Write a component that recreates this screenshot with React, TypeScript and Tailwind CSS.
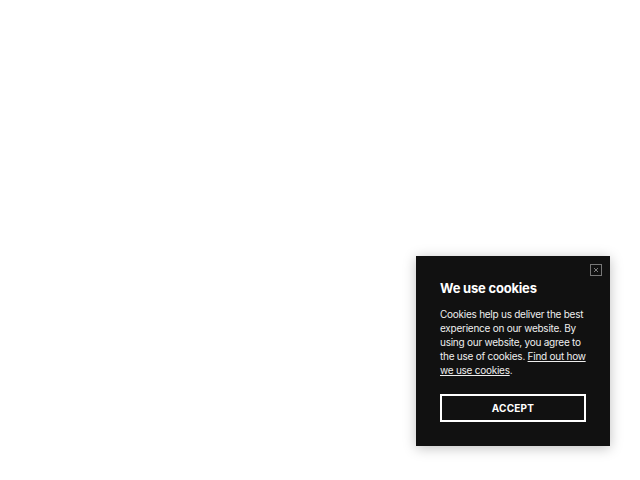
import React from 'react';

const CookieBanner: React.FC = () => {
  return (
    <div className="relative w-[194px] bg-[#111111] px-6 pt-6 pb-6 text-white shadow-[0_2px_12px_rgba(0,0,0,0.25)]">
      <button
        aria-label="Close"
        className="absolute right-[8px] top-[8px] flex h-[12px] w-[12px] items-center justify-center border border-[#777]"
      >
        <svg width="6" height="6" viewBox="0 0 6 6" stroke="#999" strokeWidth="0.8">
          <path d="M1 1L5 5M5 1L1 5" />
        </svg>
      </button>
      <h2 className="text-[13px] font-bold leading-[16px] tracking-[-0.2px]">We use cookies</h2>
      <p className="mt-[11px] w-[150px] text-[10px] leading-[14px] tracking-[-0.25px] text-[#eeeeee]">
        Cookies help us deliver the best experience on our website. By using our website, you agree to the use of cookies.{' '}
        <a href="#" className="underline">Find out how we use cookies</a>.
      </p>
      <button className="mt-[17px] flex h-[28px] w-full items-center justify-center border-2 border-white text-[10px] font-bold tracking-[0.2px]">
        ACCEPT
      </button>
    </div>
  );
};

export default function App() {
  return (
    <div className="flex h-screen w-full items-end justify-end bg-white pb-[34px] pr-[30px] font-['Inter',sans-serif]">
      <CookieBanner />
    </div>
  );
}
